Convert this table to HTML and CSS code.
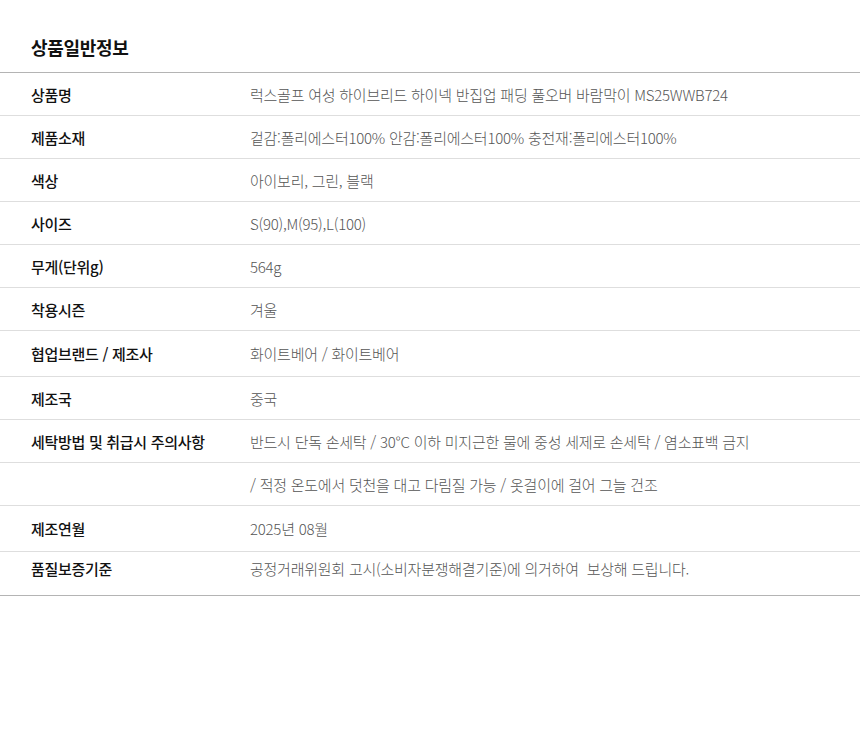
FILE: index.html
```html
<!DOCTYPE html>
<html lang="ko">
<head>
<meta charset="utf-8">
<title>상품일반정보</title>
<link rel="stylesheet" href="styles.css">
</head>
<body>
<section class="info">
  <h2 class="info-title">상품일반정보</h2>
  <div class="info-table">
    <div class="row"><div class="label">상품명</div><div class="value">럭스골프 여성 하이브리드 하이넥 반집업 패딩 풀오버 바람막이 MS25WWB724</div></div>
    <div class="row"><div class="label">제품소재</div><div class="value">겉감:폴리에스터100% 안감:폴리에스터100% 충전재:폴리에스터100%</div></div>
    <div class="row"><div class="label">색상</div><div class="value">아이보리, 그린, 블랙</div></div>
    <div class="row"><div class="label">사이즈</div><div class="value">S(90),M(95),L(100)</div></div>
    <div class="row"><div class="label">무게(단위g)</div><div class="value">564g</div></div>
    <div class="row"><div class="label">착용시즌</div><div class="value">겨울</div></div>
    <div class="row row-tall"><div class="label">협업브랜드 / 제조사</div><div class="value">화이트베어 / 화이트베어</div></div>
    <div class="row"><div class="label">제조국</div><div class="value">중국</div></div>
    <div class="row"><div class="label">세탁방법 및 취급시 주의사항</div><div class="value">반드시 단독 손세탁 / 30°C 이하 미지근한 물에 중성 세제로 손세탁 / 염소표백 금지</div></div>
    <div class="row"><div class="label"></div><div class="value">/ 적정 온도에서 덧천을 대고 다림질 가능 / 옷걸이에 걸어 그늘 건조</div></div>
    <div class="row row-tall"><div class="label">제조연월</div><div class="value">2025년 08월</div></div>
    <div class="row row-last"><div class="label">품질보증기준</div><div class="value">공정거래위원회 고시(소비자분쟁해결기준)에 의거하여&nbsp; 보상해 드립니다.</div></div>
  </div>
</section>
</body>
</html>
```

FILE: styles.css
```css
html, body {
  margin: 0;
  padding: 0;
  background: #fff;
}

body {
  font-family: "Noto Sans CJK KR", "Noto Sans", sans-serif;
  color: #111;
}

.info {
  padding-top: 34px;
}

.info-title {
  margin: 0;
  padding: 0 0 0 31px;
  height: 26px;
  line-height: 26px;
  font-size: 18px;
  font-weight: 700;
  color: #111;
  letter-spacing: -0.3px;
}

.info-table {
  margin-top: 12px;
  padding-bottom: 10px;
  border-top: 1px solid #b4b4b4;
  border-bottom: 1px solid #b4b4b4;
}

.row {
  display: grid;
  grid-template-columns: 250px 1fr;
  align-items: center;
  height: 42px;
  border-bottom: 1px solid #dedede;
}

.row-tall {
  height: 45px;
}

.row-last {
  height: 33px;
  border-bottom: none;
}

.label {
  padding-left: 31px;
  font-size: 15px;
  font-weight: 500;
  color: #111;
  letter-spacing: -0.3px;
}

.value {
  font-size: 15px;
  font-weight: 300;
  color: #555;
  letter-spacing: -0.24px;
}
```
